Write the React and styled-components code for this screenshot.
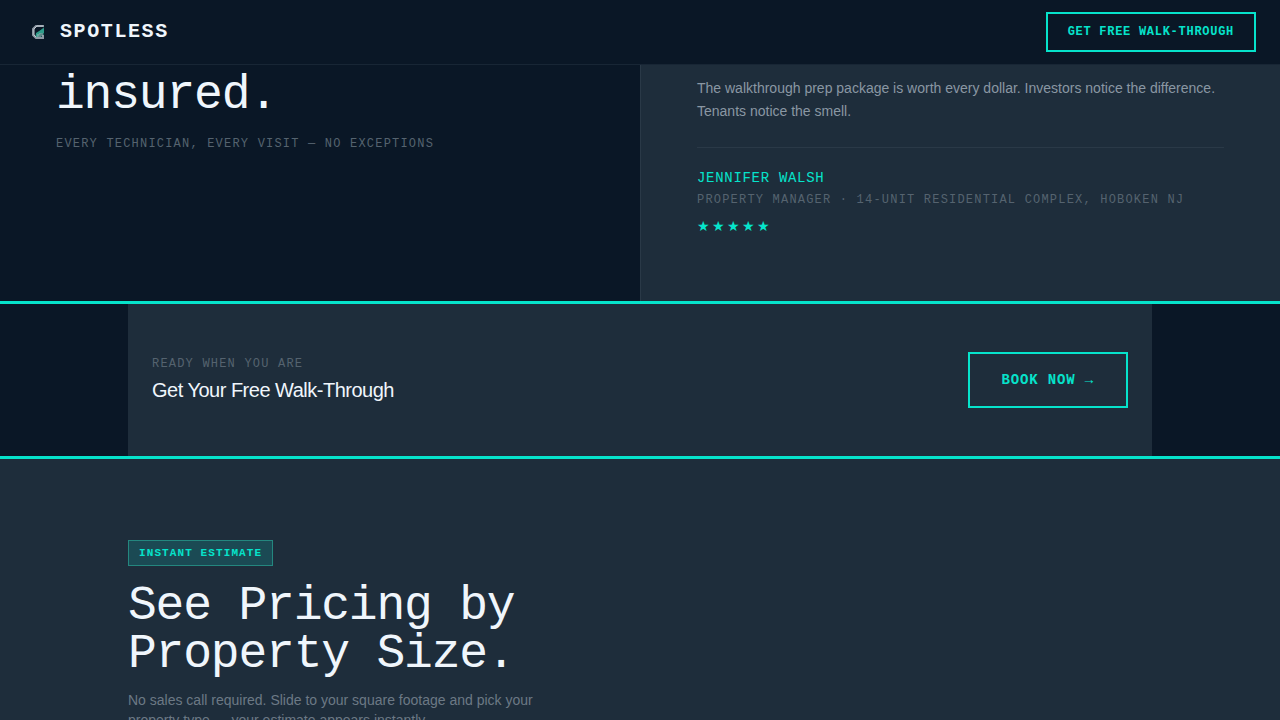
import React from 'react';
import styled, {createGlobalStyle, ThemeProvider} from 'styled-components';

const theme = {
    ink: '#0a1726',
    panel: '#1e2d3b',
    line: '#2a3947',
    teal: '#06e3cb',
    white: '#f0f6fc',
    muted: '#8a97a3',
    dim: '#6c7985',
    faint: '#55636f',
    mono: '"Liberation Mono", monospace',
    sans: '"Liberation Sans", sans-serif'
};

const Logo = () => (
    <LogoMark viewBox="0 0 28 28" aria-hidden="true">
        <path d="M10 18l10-9v10h-9z" fill="#1d5a5a"/>
        <path d="M12 15l8-5v5l-4 1-2 3h-2z" fill="#2f9c8a"/>
        <path d="M20 8H12L9 11v6l3 3h7v-3" fill="none" stroke="#8d98a4" strokeWidth="2"/>
        <path d="M19 8h-6L10 11v6l2 2" fill="none" stroke="#c3cad1" strokeWidth="1"/>
        <path d="M14 19v-3M16 19v-4M18 18v-3" stroke="#9fb4b6" strokeWidth="1"/>
    </LogoMark>
);

const Header = () => (
    <Bar>
        <Brand href="#top">
            <Logo/>
            SPOTLESS
        </Brand>
        <NavButton type="button">GET FREE WALK-THROUGH</NavButton>
    </Bar>
);

const Proof = () => (
    <Split>
        <Claim>
            <Heading>insured.</Heading>
            <Label>EVERY TECHNICIAN, EVERY VISIT — NO EXCEPTIONS</Label>
        </Claim>
        <Quote>
            <QuoteText>
                The walkthrough prep package is worth every dollar. Investors notice the difference.
                Tenants notice the smell.
            </QuoteText>
            <Author>
                <Name>JENNIFER WALSH</Name>
                <Label>PROPERTY MANAGER · 14-UNIT RESIDENTIAL COMPLEX, HOBOKEN NJ</Label>
                <Stars role="img" aria-label="5 out of 5 stars">★★★★★</Stars>
            </Author>
        </Quote>
    </Split>
);

const Booking = () => (
    <Band>
        <BandInner>
            <div>
                <Label>READY WHEN YOU ARE</Label>
                <BandTitle>Get Your Free Walk-Through</BandTitle>
            </div>
            <BookButton type="button">BOOK NOW →</BookButton>
        </BandInner>
    </Band>
);

const Estimate = () => (
    <Pricing>
        <PricingInner>
            <Badge>INSTANT ESTIMATE</Badge>
            <Heading>See Pricing by<br/>Property Size.</Heading>
            <Lead>
                No sales call required. Slide to your square footage and pick your
                property type — your estimate appears instantly.
            </Lead>
        </PricingInner>
    </Pricing>
);

const App = () => {
    return (
        <ThemeProvider theme={theme}>
            <GlobalStyle/>
            <Page id="top">
                <Header/>
                <Proof/>
                <Booking/>
                <Estimate/>
            </Page>
        </ThemeProvider>
    )
};

export default App;

const GlobalStyle = createGlobalStyle`
    * {
        box-sizing: border-box;
    }
    html, body, #root {
        height: 100%;
    }
    body {
        margin: 0;
        overflow: hidden;
        background: ${theme.ink};
        color: ${theme.white};
        font-family: ${theme.sans};
    }
    h1, h2, h3, p {
        margin: 0;
        font-weight: 400;
    }
`;

const Page = styled.div`
    display: flex;
    flex-direction: column;
    height: 100%;
    overflow: hidden;
`;

const Bar = styled.header`
    display: flex;
    flex-shrink: 0;
    align-items: center;
    justify-content: space-between;
    padding: 12px 24px;
    background: ${({theme}) => theme.ink};
    border-bottom: 1px solid #182635;
`;

const Brand = styled.a`
    display: flex;
    align-items: center;
    gap: 8px;
    color: ${({theme}) => theme.white};
    font: 700 20px/28px ${({theme}) => theme.mono};
    letter-spacing: 0.08em;
    text-decoration: none;
`;

const LogoMark = styled.svg`
    width: 28px;
    height: 28px;
`;

const OutlineButton = styled.button`
    border: 2px solid ${({theme}) => theme.teal};
    border-radius: 0;
    background: transparent;
    color: ${({theme}) => theme.teal};
    font-family: ${({theme}) => theme.mono};
    font-weight: 700;
    letter-spacing: 0.06em;
    cursor: pointer;
`;

const NavButton = styled(OutlineButton)`
    padding: 0 20px;
    font-size: 12px;
    line-height: 36px;
`;

const BookButton = styled(OutlineButton)`
    padding: 0 32px;
    font-size: 14px;
    line-height: 52px;
`;

const Split = styled.section`
    display: grid;
    flex-shrink: 0;
    grid-template-columns: 1fr 1fr;
`;

const Heading = styled.h2`
    font: 400 48px/48px ${({theme}) => theme.mono};
    letter-spacing: -0.025em;
`;

const Label = styled.p`
    color: ${({theme}) => theme.faint};
    font: 400 12px/18px ${({theme}) => theme.mono};
    letter-spacing: 0.1em;
`;

const Claim = styled.div`
    display: flex;
    flex-direction: column;
    gap: 16px;
    padding: 6px 56px 0;
`;

const Quote = styled.div`
    padding: 12px 56px 66px;
    background: ${({theme}) => theme.panel};
    border-left: 1px solid ${({theme}) => theme.line};
`;

const QuoteText = styled.p`
    color: ${({theme}) => theme.muted};
    font-size: 14px;
    line-height: 23px;
`;

const Author = styled.div`
    margin-top: 24px;
    padding-top: 20px;
    border-top: 1px solid ${({theme}) => theme.line};
`;

const Name = styled.p`
    margin-bottom: 3px;
    color: ${({theme}) => theme.teal};
    font: 400 14px/20px ${({theme}) => theme.mono};
    letter-spacing: 0.05em;
`;

const Stars = styled.div`
    margin-top: 8px;
    color: ${({theme}) => theme.teal};
    font-size: 14px;
    line-height: 18px;
    letter-spacing: 2px;
`;

const Band = styled.section`
    flex-shrink: 0;
    border-top: 3px solid ${({theme}) => theme.teal};
    border-bottom: 3px solid ${({theme}) => theme.teal};
`;

const BandInner = styled.div`
    display: flex;
    align-items: center;
    justify-content: space-between;
    max-width: 1024px;
    margin: 0 auto;
    padding: 48px 24px;
    background: ${({theme}) => theme.panel};
`;

const BandTitle = styled.h3`
    margin-top: 2px;
    font-size: 20px;
    line-height: 30px;
    letter-spacing: -0.025em;
`;

const Pricing = styled.section`
    flex: 1 0 auto;
    padding: 81px 24px;
    background: ${({theme}) => theme.panel};
`;

const PricingInner = styled.div`
    max-width: 1024px;
    margin: 0 auto;
`;

const Badge = styled.span`
    display: inline-block;
    margin-bottom: 16px;
    padding: 4px 10px;
    border: 1px solid #24877f;
    background: #1b4a54;
    color: ${({theme}) => theme.teal};
    font: 700 11px/16px ${({theme}) => theme.mono};
    letter-spacing: 0.1em;
`;

const Lead = styled.p`
    max-width: 420px;
    margin-top: 12px;
    color: ${({theme}) => theme.dim};
    font-size: 14px;
    line-height: 20px;
`;
